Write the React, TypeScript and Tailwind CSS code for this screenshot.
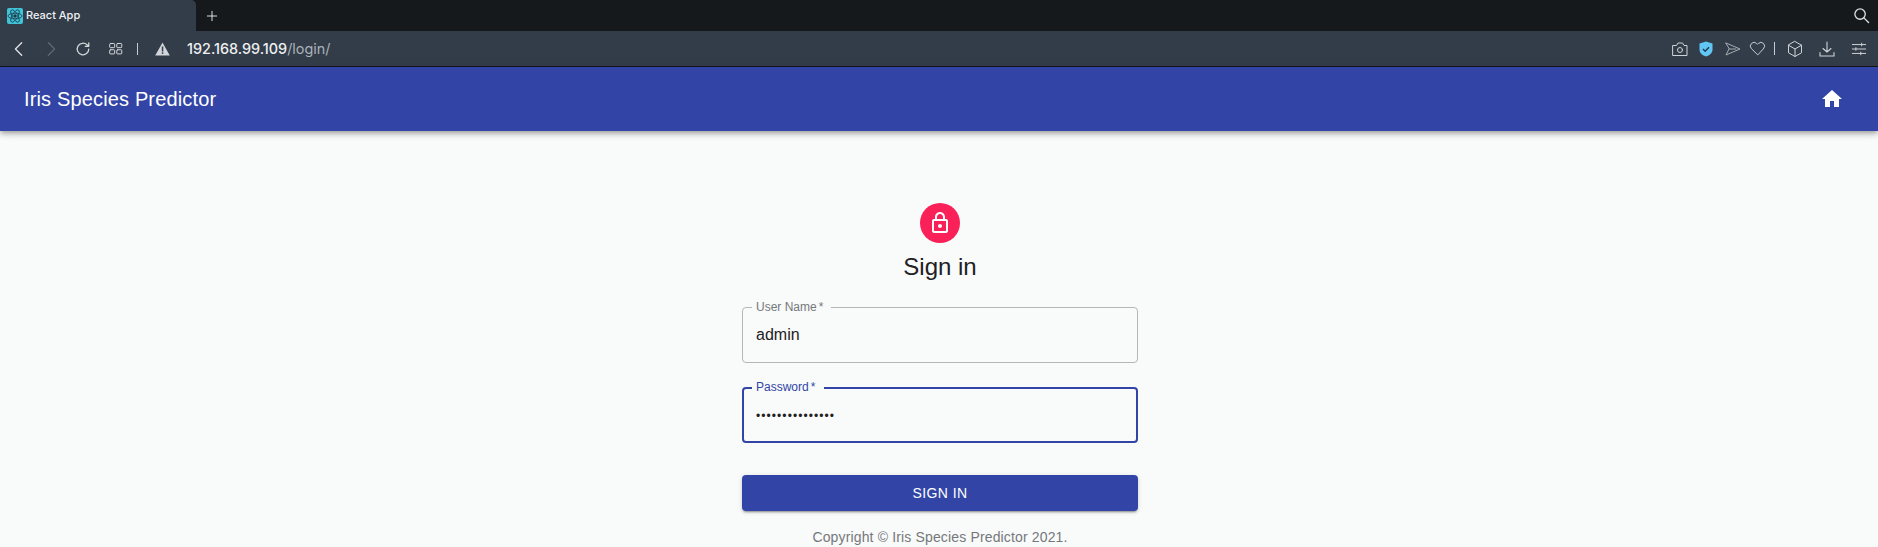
import React from "react";

const Ico = ({ children, w = 18, c = "#d5d9dd", sw = 1.3 }: { children: React.ReactNode; w?: number; c?: string; sw?: number }) => (
  <svg width={w} height={w} viewBox="0 0 18 18" fill="none" stroke={c} strokeWidth={sw} strokeLinecap="round" strokeLinejoin="round">{children}</svg>
);

function Field({ label, value, focused, mb, notch }: { label: string; value: React.ReactNode; focused?: boolean; mb: string; notch: string }) {
  return (
    <div className={`relative flex h-[56px] w-full flex-col ${mb}`}>
      <fieldset className={`-mt-[5px] h-[61px] shrink-0 rounded-[4px] ${focused ? "border-2 border-[#3245a6] pl-[7px] pr-[7px]" : "border border-[#b4b6b7] pl-[8px] pr-[8px]"}`}>
        <legend className={`h-[11px] p-0 ${notch}`} />
      </fieldset>
      <span className={`absolute left-[14px] top-[-6px] text-[12px] leading-[12px] ${focused ? "text-[#3245a6]" : "text-[#75787a]"}`}>{label}<span className="ml-[2px]">*</span></span>
      <div className="absolute left-[14px] top-[18px] text-[16px] leading-[19px] text-[#1f2122]">{value}</div>
    </div>
  );
}

export default function App() {
  return (
    <div className="flex h-[547px] w-[1878px] flex-col overflow-hidden bg-[#f9fafa] [font-family:'Liberation_Sans',sans-serif]">
      <div className="flex h-[31px] shrink-0 items-center bg-[#16191c]">
        <div className="flex h-[31px] w-[196px] items-center rounded-tr-[5px] bg-[#333d49] pl-[7px]">
          <svg width="16" height="16" viewBox="0 0 16 16" className="rounded-[2px] bg-[#3fc4d8]" fill="none" stroke="#1d3b4c" strokeWidth="0.8">
            <ellipse cx="8" cy="8" rx="7" ry="2.8" />
            <ellipse cx="8" cy="8" rx="7" ry="2.8" transform="rotate(60 8 8)" />
            <ellipse cx="8" cy="8" rx="7" ry="2.8" transform="rotate(120 8 8)" />
            <circle cx="8" cy="8" r="1.3" fill="#1d3b4c" />
          </svg>
          <span className="ml-[3px] text-[11px] font-medium leading-[15px] text-[#eef0f2] [font-family:Inter,sans-serif]">React App</span>
        </div>
        <div className="ml-[10px] flex w-[12px] justify-center">
          <Ico w={12} c="#eceef0" sw={1.4}><path d="M9 2v14M2 9h14" /></Ico>
        </div>
        <div className="ml-auto mr-[8px] flex">
          <Ico w={17} c="#dfe2e5" sw={1.4}><circle cx="7.5" cy="7.5" r="5.5" /><path d="M11.5 11.5L16.5 16.5" /></Ico>
        </div>
      </div>

      <div className="flex h-[36px] shrink-0 items-center border-b border-[#14171b] bg-[#333d49] pl-[11px] pr-[11px]">
        <Ico w={16} c="#dfe2e5" sw={1.5}><path d="M12 2L5 9l7 7" /></Ico>
        <span className="ml-[16px] flex"><Ico w={16} c="#5d6873" sw={1.5}><path d="M6 2l7 7-7 7" /></Ico></span>
        <span className="ml-[16px] flex"><Ico w={16} c="#d5d9dd" sw={1.4}><path d="M15.5 9a6.5 6.5 0 1 1-2-4.7L15.5 6M15.5 2v4h-4" /></Ico></span>
        <span className="ml-[17px] flex"><Ico w={15} c="#d5d9dd" sw={1.2}><rect x="2" y="3" width="6" height="5" rx="1" /><rect x="10.5" y="3" width="6" height="5" rx="1" /><rect x="2" y="10.5" width="6" height="5" rx="1" /><rect x="10.5" y="10.5" width="6" height="5" rx="1" /></Ico></span>
        <span className="ml-[14px] h-[12px] w-px bg-[#c6cbd0]" />
        <span className="ml-[17px] flex">
          <svg width="15" height="14" viewBox="0 0 15 14"><path d="M7.5 0.5L14.8 13.5H0.2Z" fill="#d2d6da" /><rect x="6.8" y="4.5" width="1.5" height="5" fill="#333d49" /><rect x="6.8" y="10.3" width="1.5" height="1.6" fill="#333d49" /></svg>
        </span>
        <span className="ml-[17px] text-[14.4px] font-medium leading-[18px] text-[#eef0f2] [font-family:Inter,sans-serif]">192.168.99.109<span className="font-normal text-[#aab1b8]">/login/</span></span>
        <div className="ml-auto flex items-center">
          <span className="flex"><Ico w={18} c="#cfd3d7" sw={1}><path d="M2 5.5h3.5L7 3h4.5L13 5.5h3v10H2z" /><circle cx="9" cy="10" r="2.5" /></Ico></span>
          <span className="ml-[10px] flex">
            <svg width="14" height="16" viewBox="0 0 14 16"><path d="M7 0.5L13.5 2.5V8.5C13.5 12 10.5 14.5 7 15.5C3.5 14.5 0.5 12 0.5 8.5V2.5Z" fill="#62c6f5" /><path d="M4 8l2.2 2.2L10 6.3" fill="none" stroke="#1e3a52" strokeWidth="1.5" /></svg>
          </span>
          <span className="ml-[11px] flex"><Ico w={18} c="#a5abb1" sw={1}><path d="M2 3l14 6-14 6 3-6zM5 9h7" /></Ico></span>
          <span className="ml-[7px] flex"><Ico w={17} c="#cfd3d7" sw={1}><path d="M9 15.5L2.6 9.2a3.9 3.9 0 0 1 0-5.5 3.9 3.9 0 0 1 5.5 0l.9.9.9-.9a3.9 3.9 0 0 1 5.5 0 3.9 3.9 0 0 1 0 5.5z" /></Ico></span>
          <span className="ml-[8px] h-[13px] w-px bg-[#c6cbd0]" />
          <span className="ml-[11px] flex"><Ico w={18} c="#cfd3d7" sw={1}><path d="M9 1.5l6.5 3.7v7.6L9 16.5l-6.5-3.7V5.2zM2.5 5.2L9 9l6.5-3.8M9 9v7.5" /></Ico></span>
          <span className="ml-[14px] flex"><Ico w={18} c="#cfd3d7" sw={1.1}><path d="M9 2v10M5 8.5L9 12l4-3.5M2 12.5v3.5h14v-3.5" /></Ico></span>
          <span className="ml-[15px] flex"><Ico w={16} c="#cfd3d7" sw={1.1}><path d="M1.5 4h15M1.5 9h15M1.5 14h15M12 2.5v3M5.5 7.5v3M11 12.5v3" /></Ico></span>
        </div>
      </div>

      <header className="flex h-[64px] shrink-0 items-center justify-between bg-[#3245a6] pl-[24px] pr-[34px] shadow-[0_2px_4px_-1px_rgba(0,0,0,0.2),0_4px_5px_0_rgba(0,0,0,0.14),0_1px_10px_0_rgba(0,0,0,0.12)]">
        <h1 className="-mt-[1px] text-[20px] font-normal leading-[32px] tracking-[0.15px] text-white">Iris Species Predictor</h1>
        <svg width="24" height="24" viewBox="0 0 24 24" fill="#fff"><path d="M10 20v-6h4v6h5v-8h3L12 3 2 12h3v8z" /></svg>
      </header>

      <main className="ml-[742px] flex w-[396px] flex-col items-center pt-[72px]">
        <div className="flex h-[40px] w-[40px] items-center justify-center rounded-full bg-[#fa2058]">
          <svg width="24" height="24" viewBox="0 0 24 24" fill="#fff"><path d="M18 8h-1V6c0-2.76-2.24-5-5-5S7 3.24 7 6v2H6c-1.1 0-2 .9-2 2v10c0 1.1.9 2 2 2h12c1.1 0 2-.9 2-2V10c0-1.1-.9-2-2-2zM9 6c0-1.66 1.34-3 3-3s3 1.34 3 3v2H9V6zm9 14H6V10h12v10zm-6-3c1.1 0 2-.9 2-2s-.9-2-2-2-2 .9-2 2 .9 2 2 2z" /></svg>
        </div>
        <h2 className="mt-[8px] text-[24px] font-normal leading-[32px] text-[#1f2122]">Sign in</h2>
        <div className="mt-[24px] w-full">
          <Field label="User Name" value="admin" mb="mb-[24px]" notch="ml-[1px] w-[79px]" />
          <Field label="Password" value={<span className="text-[12px] tracking-[1.07px]">•••••••••••••••</span>} focused mb="mb-[32px]" notch="ml-[1px] w-[72px]" />
          <button className="block h-[36px] w-full rounded-[4px] bg-[#3245a6] text-[14px] font-normal tracking-[0.4px] text-white shadow-[0_3px_1px_-2px_rgba(0,0,0,0.2),0_2px_2px_0_rgba(0,0,0,0.14),0_1px_5px_0_rgba(0,0,0,0.12)]">SIGN IN</button>
        </div>
        <p className="mt-[16px] text-center text-[14px] leading-[20px] tracking-[0.15px] text-[#75787a]">Copyright © Iris Species Predictor 2021.</p>
      </main>
    </div>
  );
}
